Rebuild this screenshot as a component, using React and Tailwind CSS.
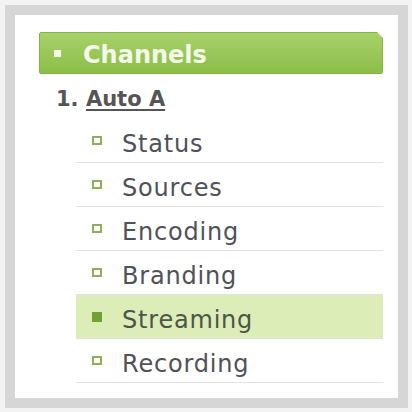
import React from 'react';

const items = ['Status', 'Sources', 'Encoding', 'Branding', 'Streaming', 'Recording'];

export default function App() {
  const active = 'Streaming';

  return (
    <div className="w-[412px] h-[412px] bg-[#f3f3f3] p-[5px] font-['DejaVu_Sans',sans-serif]">
      <div className="w-[403px] h-[403px] border-[10px] border-[#d6d6d6] bg-white pl-[24px] pr-[15px] pt-[17px]">
        {/* section header */}
        <div className="relative h-[42px] flex items-center rounded-[2px] border border-[#86b443] bg-gradient-to-b from-[#a8d26a] to-[#8cbd48] pl-[14px] [clip-path:polygon(0_0,calc(100%-6px)_0,100%_6px,100%_100%,0_100%)]">
          <span className="w-[7px] h-[7px] bg-[#f4fbe8]" />
          <span className="ml-[22px] pt-[4px] text-[24px] leading-[26px] font-bold text-[#f4fbe8]">
            Channels
          </span>
        </div>

        {/* channel */}
        <div className="mt-[13px] ml-[17px] h-[25px] text-[21px] leading-[25px] font-bold text-[#555558]">
          1. <span className="underline underline-offset-[3px] decoration-[1.5px]">Auto A</span>
        </div>

        <ul className="mt-[7px] ml-[37px]">
          {items.map((name) => {
            const isActive = name === active;
            return (
              <li
                key={name}
                className={`h-[44px] flex items-center border-b border-[#e2e2e2] pl-[16px] ${isActive ? 'bg-[#dcedb8]' : ''}`}
              >
                <span
                  className={
                    isActive
                      ? 'w-[10px] h-[10px] bg-[#73a034]'
                      : 'w-[10px] h-[9px] border-2 border-[#8fae5c] bg-white'
                  }
                />
                <span
                  className={`ml-[20px] pt-[7px] text-[24px] leading-[26px] tracking-[0.8px] ${isActive ? 'text-[#4c5648]' : 'text-[#515159]'}`}
                >
                  {name}
                </span>
              </li>
            );
          })}
        </ul>
      </div>
    </div>
  );
}
